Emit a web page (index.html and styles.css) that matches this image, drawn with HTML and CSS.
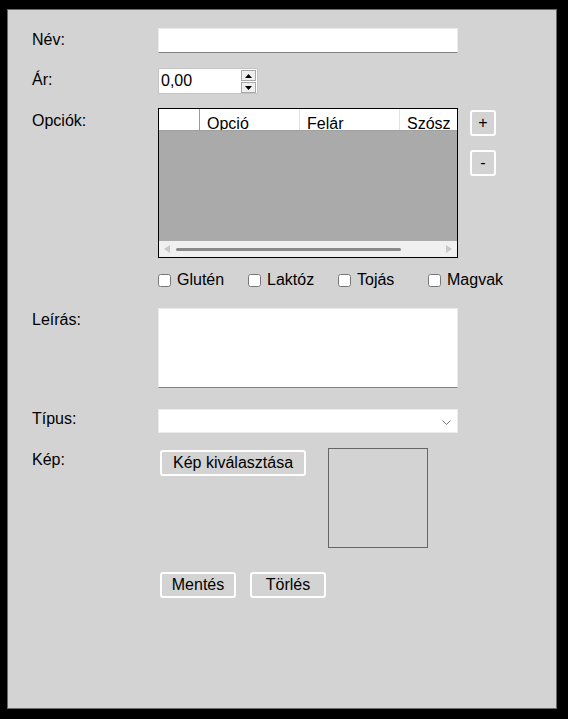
FILE: index.html
```html
<!DOCTYPE html>
<html lang="hu">
<head>
<meta charset="utf-8">
<title>Étel szerkesztése</title>
<link rel="stylesheet" href="styles.css">
</head>
<body>
<div class="panel">
  <div class="row row-name">
    <label class="lbl">Név:</label>
    <div class="text-input"></div>
  </div>
  <div class="row row-price">
    <label class="lbl">Ár:</label>
    <div class="num-input">
      <span class="num-value">0,00</span>
      <span class="spin">
        <span class="spin-btn"><svg width="7" height="4" viewBox="0 0 7 4"><path d="M0 4 L3.5 0 L7 4 Z" fill="#000"/></svg></span>
        <span class="spin-btn"><svg width="7" height="4" viewBox="0 0 7 4"><path d="M0 0 L3.5 4 L7 0 Z" fill="#000"/></svg></span>
      </span>
    </div>
  </div>
  <div class="row row-options">
    <label class="lbl lbl-opt">Opciók:</label>
    <div class="table">
      <div class="thead">
        <div class="th th-first"></div>
        <div class="th th-mid">Opció</div>
        <div class="th th-mid">Felár</div>
        <div class="th th-last">Szósz</div>
      </div>
      <div class="tbody"></div>
      <div class="hscroll">
        <svg class="arrow" width="6" height="8" viewBox="0 0 6 8"><path d="M6 0 L0 4 L6 8 Z" fill="#c8c8c8"/></svg>
        <span class="thumb"></span>
        <svg class="arrow" width="6" height="8" viewBox="0 0 6 8"><path d="M0 0 L6 4 L0 8 Z" fill="#c8c8c8"/></svg>
      </div>
    </div>
    <div class="side-buttons">
      <button class="btn btn-sq">+</button>
      <button class="btn btn-sq">-</button>
    </div>
  </div>
  <div class="row row-checks">
    <div class="checks">
      <label class="check"><input type="checkbox"><span>Glutén</span></label>
      <label class="check"><input type="checkbox"><span>Laktóz</span></label>
      <label class="check"><input type="checkbox"><span>Tojás</span></label>
      <label class="check"><input type="checkbox"><span>Magvak</span></label>
    </div>
  </div>
  <div class="row row-desc">
    <label class="lbl">Leírás:</label>
    <div class="text-area"></div>
  </div>
  <div class="row row-type">
    <label class="lbl lbl-type">Típus:</label>
    <div class="select">
      <svg class="chev" width="9" height="5" viewBox="0 0 9 5"><path d="M0.5 0.5 L4.5 4.5 L8.5 0.5" fill="none" stroke="#777" stroke-width="1"/></svg>
    </div>
  </div>
  <div class="row row-image">
    <label class="lbl lbl-img">Kép:</label>
    <button class="btn btn-pick">Kép kiválasztása</button>
    <div class="preview"></div>
  </div>
  <div class="row row-actions">
    <button class="btn btn-act">Mentés</button>
    <button class="btn btn-act">Törlés</button>
  </div>
</div>
</body>
</html>
```
FILE: styles.css
```css
* { box-sizing: border-box; }

html, body {
  margin: 0;
  padding: 0;
  background: #000;
}

body {
  font-family: "Liberation Sans", Arial, sans-serif;
  font-size: 16px;
  line-height: 18px;
  color: #000;
}

.panel {
  margin: 9px 0 0 7px;
  width: 550px;
  height: 700px;
  background: #d3d3d3;
  border: 1px solid #6a6a6a;
  padding: 18px 0 0 24px;
}

.row {
  display: flex;
  align-items: flex-start;
}

.lbl {
  width: 126px;
  flex: none;
  padding-top: 3px;
}

.lbl-opt { padding-top: 4px; }
.lbl-type { padding-top: 1px; }
.lbl-img { padding-top: 3px; }

.row-price { margin-top: 15px; }
.row-options { margin-top: 14px; }
.row-checks { margin-top: 13px; padding-left: 126px; }
.row-desc { margin-top: 19px; }
.row-type { margin-top: 21px; }
.row-image { margin-top: 15px; }
.row-actions { margin-top: 24px; padding-left: 128px; gap: 14px; }

.text-input {
  width: 300px;
  height: 25px;
  background: #fff;
  border: 1px solid #ececec;
  border-bottom-color: #808080;
}

.num-input {
  width: 100px;
  height: 26px;
  background: #fff;
  border: 1px solid #c4c4c4;
  display: flex;
  align-items: center;
  justify-content: space-between;
  padding: 0 0 0 2px;
}

.num-value { line-height: 18px; }

.spin {
  display: flex;
  flex-direction: column;
  gap: 1px;
  margin-top: 1px;
  width: 16px;
}

.spin-btn {
  width: 15px;
  height: 11px;
  background: #efefef;
  border: 1px solid #a8a8a8;
  display: flex;
  align-items: center;
  justify-content: center;
}

.table {
  width: 300px;
  height: 150px;
  border: 1px solid #000;
  background: #aaaaaa;
  display: flex;
  flex-direction: column;
  overflow: hidden;
}

.thead {
  height: 22px;
  flex: none;
  display: flex;
  background: #fff;
  border-bottom: 1px solid #a0a0a0;
  overflow: hidden;
  white-space: nowrap;
}

.th {
  height: 21px;
  padding: 6px 0 0 7px;
  flex: none;
  overflow: hidden;
}

.th-first { width: 41px; border-right: 1px solid #9a9a9a; }
.th-mid { width: 100px; border-right: 1px solid #e2e2e2; }
.th-last { width: 100px; }

.tbody { flex: 1; }

.hscroll {
  height: 16px;
  flex: none;
  background: #f0f0f0;
  display: flex;
  align-items: center;
  padding: 0 5px 0 5px;
}

.thumb {
  margin: 0 auto 0 6px;
  width: 225px;
  height: 3px;
  border-radius: 2px;
  background: #8a8a8a;
}

.arrow { flex: none; }

.side-buttons {
  display: flex;
  flex-direction: column;
  gap: 14px;
  margin: 2px 0 0 12px;
}

.btn {
  font-family: "Liberation Sans", Arial, sans-serif;
  font-size: 16px;
  line-height: 18px;
  color: #000;
  background: #d3d3d3;
  border: 2px solid #fff;
  border-radius: 3px;
  padding: 0;
  margin: 0;
  height: 26px;
}

.btn-sq { width: 26px; }

.checks {
  display: flex;
  height: 18px;
}

.check {
  width: 90px;
  display: flex;
  align-items: center;
  gap: 6px;
}

.check input {
  margin: 0;
  width: 13px;
  height: 13px;
}

.text-area {
  width: 300px;
  height: 80px;
  background: #fff;
  border: 1px solid #ececec;
  border-bottom-color: #808080;
}

.select {
  width: 300px;
  height: 24px;
  background: #fff;
  border: 1px solid #ececec;
  display: flex;
  align-items: center;
  justify-content: flex-end;
  padding-right: 6px;
}

.chev { margin-top: 2px; }

.btn-pick {
  width: 146px;
  margin: 2px 0 0 2px;
}

.preview {
  width: 100px;
  height: 100px;
  border: 1px solid #666;
  margin-left: 22px;
}

.btn-act { width: 76px; }
```
